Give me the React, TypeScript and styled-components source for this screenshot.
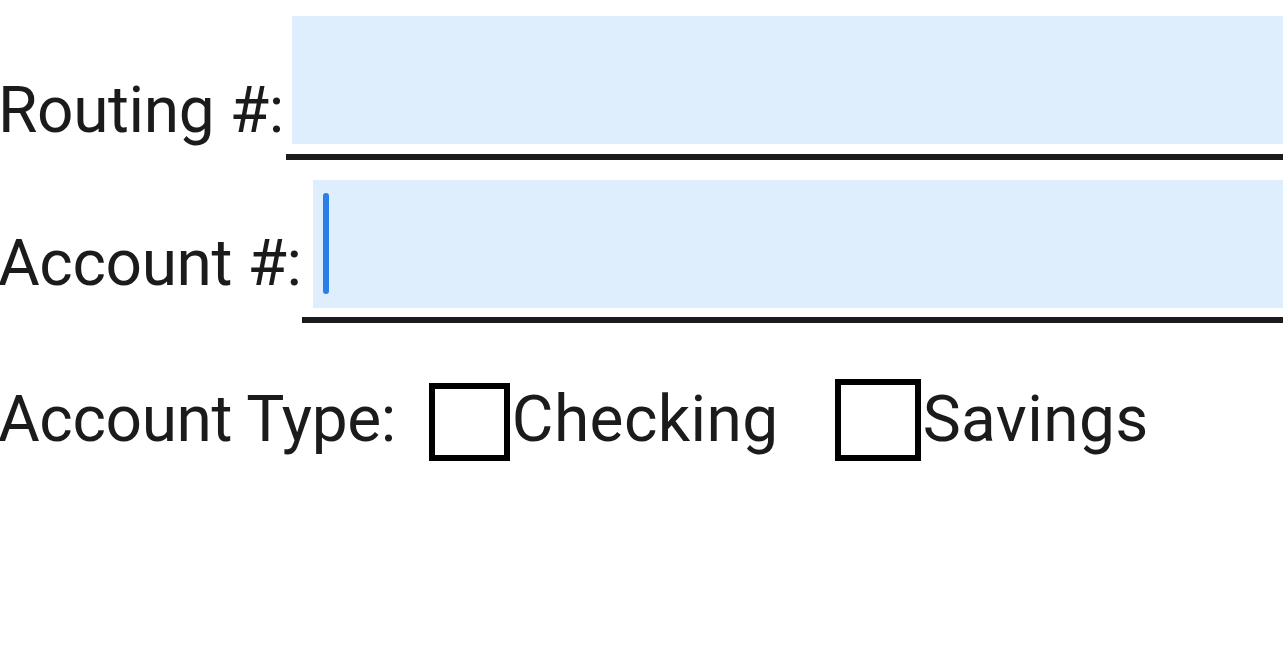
import React from "react";
import styled, { createGlobalStyle } from "styled-components";

const Global = createGlobalStyle`
  html, body { margin: 0; padding: 0; background: #ffffff; }
  body { font-family: Roboto, "Liberation Sans", Arial, sans-serif; color: #1b1b1b; overflow: hidden; }
`;

const Form = styled.form`
  display: flex;
  flex-direction: column;
  width: 1283px;
  padding-top: 16px;
`;

const Row = styled.div<{ $gap?: number }>`
  display: flex;
  align-items: flex-end;
  margin-bottom: ${(p) => p.$gap ?? 0}px;
`;

const Label = styled.label<{ $mb?: number; $mr?: number }>`
  font-size: 64px;
  line-height: 76px;
  letter-spacing: -0.4px;
  white-space: nowrap;
  margin-left: -2px;
  margin-right: ${(p) => p.$mr ?? 0}px;
  margin-bottom: ${(p) => p.$mb ?? 0}px;
`;

const FieldWrap = styled.div<{ $indent: number; $pb: number }>`
  flex: 1;
  display: flex;
  padding-left: ${(p) => p.$indent}px;
  padding-bottom: ${(p) => p.$pb}px;
  border-bottom: 6px solid #1b1b1b;
`;

const Input = styled.div`
  flex: 1;
  height: 128px;
  background: #dfeefd;
  position: relative;
`;

const Caret = styled.span`
  position: absolute;
  left: 10px;
  top: 13px;
  width: 6px;
  height: 101px;
  border-radius: 3px;
  background: #2a7fe8;
`;

const TypeRow = styled.div`
  display: flex;
  align-items: center;
  margin-top: 56px;
`;

const TypeLabel = styled.span`
  font-size: 64px;
  line-height: 76px;
  letter-spacing: -0.4px;
  margin-left: -2px;
  margin-right: 33px;
`;

const Option = styled.label<{ $mr?: number }>`
  display: flex;
  align-items: center;
  margin-right: ${(p) => p.$mr ?? 0}px;
`;

const Box = styled.span<{ $w: number; $h: number; $b: number; $dy: number }>`
  box-sizing: border-box;
  width: ${(p) => p.$w}px;
  height: ${(p) => p.$h}px;
  border: ${(p) => p.$b}px solid #000;
  background: #fff;
  margin-right: 2px;
  transform: translateY(${(p) => p.$dy}px);
`;

const OptionText = styled.span`
  font-size: 64px;
  line-height: 76px;
  letter-spacing: 0.4px;
`;

export default function App() {
  return (
    <>
      <Global />
      <Form>
        <Row $gap={20}>
          <Label $mb={11} $mr={2}>Routing #:</Label>
          <FieldWrap $indent={6} $pb={10}>
            <Input />
          </FieldWrap>
        </Row>
        <Row>
          <Label $mb={21}>Account #:</Label>
          <FieldWrap $indent={11} $pb={9}>
            <Input>
              <Caret />
            </Input>
          </FieldWrap>
        </Row>
        <TypeRow>
          <TypeLabel>Account Type:</TypeLabel>
          <Option $mr={56}>
            <Box $w={81} $h={78} $b={6} $dy={2} />
            <OptionText>Checking</OptionText>
          </Option>
          <Option>
            <Box $w={86} $h={82} $b={6} $dy={0} />
            <OptionText>Savings</OptionText>
          </Option>
        </TypeRow>
      </Form>
    </>
  );
}
